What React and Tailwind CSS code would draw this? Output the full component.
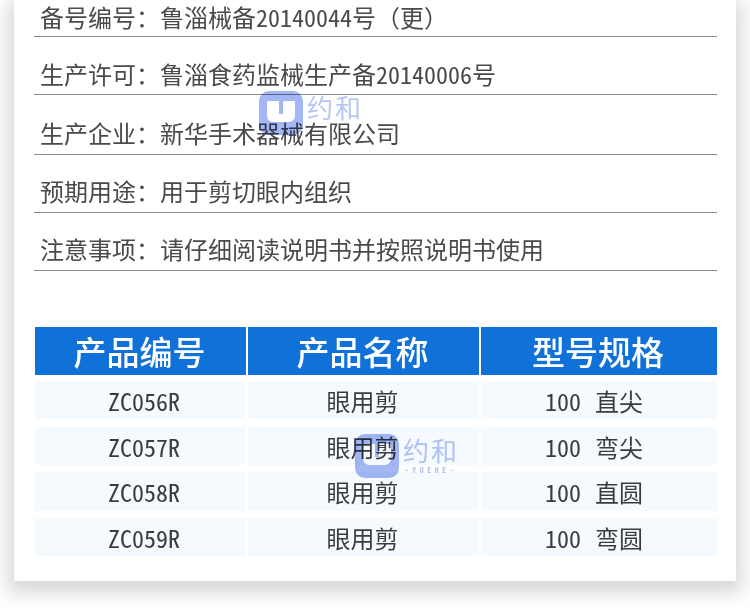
const info = [
  { label: '备号编号', value: '鲁淄械备20140044号（更）', h: 'h-[37px] pb-[4px]' },
  { label: '生产许可', value: '鲁淄食药监械生产备20140006号', h: 'h-[58px] pb-[5px]' },
  { label: '生产企业', value: '新华手术器械有限公司', h: 'h-[60px] pb-[6px]' },
  { label: '预期用途', value: '用于剪切眼内组织', h: 'h-[58px] pb-[6px]' },
  { label: '注意事项', value: '请仔细阅读说明书并按照说明书使用', h: 'h-[58px] pb-[6px]' },
]

const products = [
  { code: 'ZC056R', name: '眼用剪', spec: '直尖', h: 'h-[38px] mb-[8px]' },
  { code: 'ZC057R', name: '眼用剪', spec: '弯尖', h: 'h-[38px] mb-[7px]' },
  { code: 'ZC058R', name: '眼用剪', spec: '直圆', h: 'h-[39px] mb-[7px]' },
  { code: 'ZC059R', name: '眼用剪', spec: '弯圆', h: 'h-[38px]' },
]

const font = 'font-["Noto_Sans_Mono_CJK_SC","Noto_Sans_CJK_SC",sans-serif]'
const headCell = 'h-[48px] bg-[#1071d9] text-white text-[33px] leading-[48px] font-["Noto_Sans_CJK_SC",sans-serif] font-medium pr-[2px]'
const cell = 'flex items-center justify-center bg-[#f5faff] leading-none pt-[1px]'

function Watermark({ className, sub }) {
  return (
    <div className={`absolute flex items-start gap-[4px] opacity-85 mix-blend-multiply pointer-events-none ${className}`}>
      <svg width="44" height="44" viewBox="0 0 44 44" className="shrink-0">
        <path
          fillRule="evenodd"
          fill="#93abf2"
          d="M10 0H34A10 10 0 0 1 44 10V34A10 10 0 0 1 34 44H10A10 10 0 0 1 0 34V10A10 10 0 0 1 10 0ZM8 10V25A6 6 0 0 0 14 31H30A6 6 0 0 0 36 25V10H24V23H20V10Z"
        />
      </svg>
      <div className="flex flex-col items-center">
        <span className="text-[26px] leading-[32px] tracking-[2px] text-[#a9bbf0]">约和</span>
        {sub && <span className="text-[8px] leading-[8px] tracking-[3.5px] font-bold text-[#a9bbf0]">-YUEHE-</span>}
      </div>
    </div>
  )
}

export default function App() {
  return (
    <div className={`w-[750px] h-[612px] bg-white overflow-hidden ${font}`}>
      <div className="relative ml-[14px] w-[722px] h-[581px] bg-white shadow-[0_6px_18px_6px_rgba(0,0,0,0.16)] pl-[20px] pr-[19px]">
        <div className="text-[24px] leading-[30px] text-[#4a4a4a]">
          {info.map((row) => (
            <div key={row.label} className={`flex items-end pl-[6px] border-b border-[#8a8a8a] ${row.h}`}>
              <span className="w-[120px]">{row.label}：</span>
              <span>{row.value}</span>
            </div>
          ))}
        </div>

        <div className="mt-[56px] ml-[1px] grid grid-cols-[211px_231px_236px] gap-x-[2px] text-center">
          <div className={headCell}>产品编号</div>
          <div className={headCell}>产品名称</div>
          <div className={headCell}>型号规格</div>
        </div>

        <div className="mt-[6px] ml-[1px] text-[24px] text-[#3c3c3c]">
          {products.map((p) => (
            <div key={p.code} className={`grid grid-cols-[211px_231px_236px] gap-x-[2px] ${p.h}`}>
              <div className={`${cell} pl-[7px]`}>{p.code}</div>
              <div className={`${cell} pr-[2px]`}>{p.name}</div>
              <div className={`${cell} pr-[10px]`}>100<span className="ml-[14px]">{p.spec}</span></div>
            </div>
          ))}
        </div>

        <Watermark className="left-[245px] top-[91px]" />
        <Watermark className="left-[341px] top-[434px]" sub />
      </div>
    </div>
  )
}
